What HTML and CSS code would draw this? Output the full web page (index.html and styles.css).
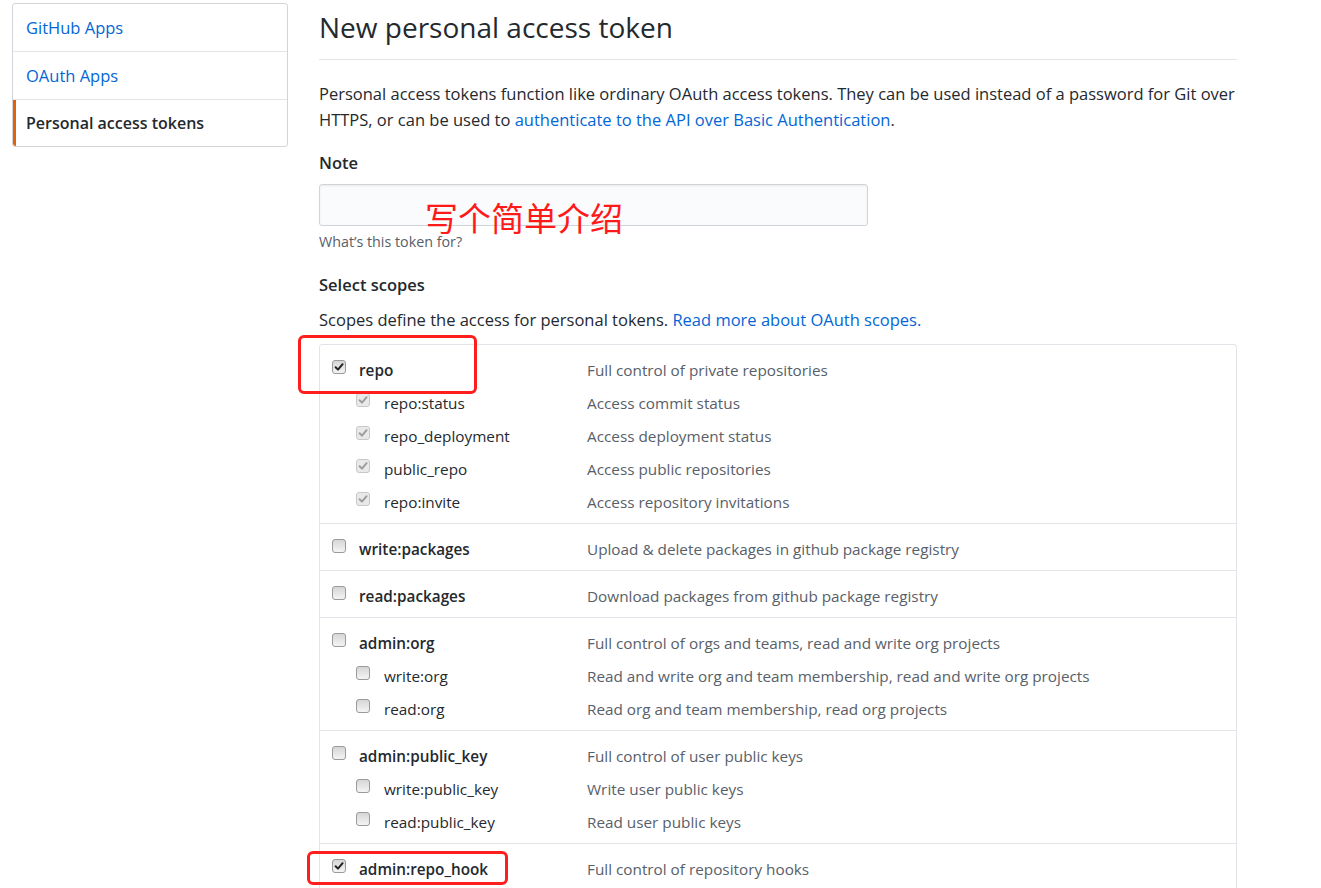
FILE: index.html
```html
<!DOCTYPE html>
<html lang="en">
<head>
<meta charset="utf-8">
<title>New personal access token</title>
<link rel="stylesheet" href="styles.css">
</head>
<body>
<div class="page">
  <nav class="menu">
    <a class="menu-item" href="#">GitHub Apps</a>
    <a class="menu-item" href="#">OAuth Apps</a>
    <a class="menu-item selected" href="#">Personal access tokens</a>
  </nav>
  <main class="content">
    <h1 class="title">New personal access token</h1>
    <p class="text intro">Personal access tokens function like ordinary OAuth access tokens. They can be used instead of a password for Git over HTTPS, or can be used to <a class="link" href="#">authenticate to the API over Basic Authentication</a>.</p>

    <div class="field">
      <div class="field-label">Note</div>
      <div class="note-wrap">
        <input class="note-input" type="text">
        <span class="annot-text">写个简单介绍</span>
      </div>
      <p class="hint">What’s this token for?</p>
    </div>

    <div class="field-label scopes-label">Select scopes</div>
    <p class="text scopes-desc">Scopes define the access for personal tokens. <a class="link" href="#">Read more about OAuth scopes.</a></p>

    <div class="scopes">
      <div class="group">
        <span class="annot-box box-repo"></span>
        <div class="item main"><div class="name"><span class="cb checked"><svg viewBox="0 0 12 12"><path d="M2.6 6.2 5 8.6 9.6 3.2"/></svg></span>repo</div><div class="desc">Full control of private repositories</div></div>
        <div class="item sub"><div class="name"><span class="cb checked disabled"><svg viewBox="0 0 12 12"><path d="M2.6 6.2 5 8.6 9.6 3.2"/></svg></span>repo:status</div><div class="desc">Access commit status</div></div>
        <div class="item sub"><div class="name"><span class="cb checked disabled"><svg viewBox="0 0 12 12"><path d="M2.6 6.2 5 8.6 9.6 3.2"/></svg></span>repo_deployment</div><div class="desc">Access deployment status</div></div>
        <div class="item sub"><div class="name"><span class="cb checked disabled"><svg viewBox="0 0 12 12"><path d="M2.6 6.2 5 8.6 9.6 3.2"/></svg></span>public_repo</div><div class="desc">Access public repositories</div></div>
        <div class="item sub"><div class="name"><span class="cb checked disabled"><svg viewBox="0 0 12 12"><path d="M2.6 6.2 5 8.6 9.6 3.2"/></svg></span>repo:invite</div><div class="desc">Access repository invitations</div></div>
      </div>
      <div class="group">
        <div class="item main"><div class="name"><span class="cb"></span>write:packages</div><div class="desc">Upload &amp; delete packages in github package registry</div></div>
      </div>
      <div class="group">
        <div class="item main"><div class="name"><span class="cb"></span>read:packages</div><div class="desc">Download packages from github package registry</div></div>
      </div>
      <div class="group">
        <div class="item main"><div class="name"><span class="cb"></span>admin:org</div><div class="desc">Full control of orgs and teams, read and write org projects</div></div>
        <div class="item sub"><div class="name"><span class="cb"></span>write:org</div><div class="desc">Read and write org and team membership, read and write org projects</div></div>
        <div class="item sub"><div class="name"><span class="cb"></span>read:org</div><div class="desc">Read org and team membership, read org projects</div></div>
      </div>
      <div class="group">
        <div class="item main"><div class="name"><span class="cb"></span>admin:public_key</div><div class="desc">Full control of user public keys</div></div>
        <div class="item sub"><div class="name"><span class="cb"></span>write:public_key</div><div class="desc">Write user public keys</div></div>
        <div class="item sub"><div class="name"><span class="cb"></span>read:public_key</div><div class="desc">Read user public keys</div></div>
      </div>
      <div class="group">
        <span class="annot-box box-hook"></span>
        <div class="item main"><div class="name"><span class="cb checked"><svg viewBox="0 0 12 12"><path d="M2.6 6.2 5 8.6 9.6 3.2"/></svg></span>admin:repo_hook</div><div class="desc">Full control of repository hooks</div></div>
        <div class="item sub"><div class="name"><span class="cb checked disabled"><svg viewBox="0 0 12 12"><path d="M2.6 6.2 5 8.6 9.6 3.2"/></svg></span>write:repo_hook</div><div class="desc">Write repository hooks</div></div>
        <div class="item sub"><div class="name"><span class="cb checked disabled"><svg viewBox="0 0 12 12"><path d="M2.6 6.2 5 8.6 9.6 3.2"/></svg></span>read:repo_hook</div><div class="desc">Read repository hooks</div></div>
      </div>
    </div>
  </main>
</div>
</body>
</html>
```

FILE: styles.css
```css
html, body {
  margin: 0;
  padding: 0;
  background: #fff;
}
body {
  font-family: "Open Sans", "Noto Sans", "Noto Sans CJK SC", sans-serif;
  color: #24292e;
  font-size: 16px;
  overflow: hidden;
}
.page {
  display: flex;
  align-items: flex-start;
  gap: 31px;
  padding: 3px 0 0 12px;
}
.menu {
  width: 276px;
  box-sizing: border-box;
  border: 1px solid #d1d5da;
  border-radius: 3px;
  display: flex;
  flex-direction: column;
  flex-shrink: 0;
}
.menu-item {
  display: block;
  height: 47px;
  line-height: 48px;
  padding-left: 13px;
  font-size: 16.5px;
  color: #0366d6;
  text-decoration: none;
  border-bottom: 1px solid #e1e4e8;
}
.menu-item:last-child {
  border-bottom: 0;
  height: 46px;
  line-height: 46px;
}
.menu-item.selected {
  color: #24292e;
  font-size: 16px;
  font-weight: 600;
  border-left: 3px solid #e36209;
  padding-left: 10px;
  border-bottom-left-radius: 3px;
}
.content {
  width: 918px;
  flex-shrink: 0;
}
.title {
  margin: 0;
  padding: 5px 0 13px;
  line-height: 38px;
  font-size: 28px;
  font-weight: 400;
  border-bottom: 1px solid #e1e4e8;
}
.text {
  font-size: 16.5px;
  line-height: 26px;
  margin: 0;
}
.intro {
  margin-top: 21px;
}
.link {
  color: #0366d6;
  text-decoration: none;
}
.field {
  margin-top: 18px;
}
.field-label {
  font-size: 16.5px;
  font-weight: 600;
  line-height: 24px;
}
.note-wrap {
  position: relative;
  margin-top: 9px;
  width: 549px;
}
.note-input {
  display: block;
  box-sizing: border-box;
  width: 549px;
  height: 42px;
  margin: 0;
  background: #fafbfc;
  border: 1px solid #d1d5da;
  border-radius: 3px;
  box-shadow: inset 0 1px 2px rgba(27,31,35,0.075);
}
.annot-text {
  position: absolute;
  left: 106px;
  top: 13px;
  font-family: "Noto Sans CJK SC", sans-serif;
  font-size: 33px;
  line-height: 40px;
  color: #ff1a1a;
  white-space: nowrap;
}
.hint {
  margin: 6px 0 0;
  font-size: 14.3px;
  line-height: 20px;
  color: #586069;
}
.scopes-label {
  margin-top: 21px;
}
.scopes-desc {
  margin-top: 10px;
}
.scopes {
  margin-top: 11px;
  border: 1px solid #e1e4e8;
  border-radius: 3px;
}
.group {
  position: relative;
  padding: 8px 0 5px;
  border-bottom: 1px solid #e1e4e8;
}
.group:last-child {
  border-bottom: 0;
}
.item {
  display: grid;
  grid-template-columns: 267px 1fr;
  height: 33px;
  align-items: center;
  font-size: 15.3px;
}
.name {
  display: flex;
  align-items: center;
  padding-left: 12px;
  white-space: nowrap;
}
.item.main .name {
  font-weight: 600;
}
.item.sub .name {
  padding-left: 36px;
}
.desc {
  color: #586069;
  white-space: nowrap;
}
.cb {
  width: 14px;
  height: 14px;
  box-sizing: border-box;
  margin-right: 13px;
  margin-bottom: 6px;
  flex-shrink: 0;
  border: 1px solid #9a9a9a;
  border-radius: 3px;
  background: linear-gradient(#d6d6d6, #f4f4f4);
  display: flex;
}
.item.sub .cb {
  margin-right: 14px;
}
.cb svg {
  width: 12px;
  height: 12px;
  fill: none;
  stroke: #222;
  stroke-width: 2;
  stroke-linecap: round;
  stroke-linejoin: round;
}
.cb.disabled {
  border-color: #c8c8c8;
  background: #e9e9e9;
}
.cb.disabled svg {
  stroke: #9d9d9d;
}
.annot-box {
  position: absolute;
  box-sizing: border-box;
  border: 3px solid #ff1e1e;
  border-radius: 6px;
  pointer-events: none;
}
.box-repo {
  left: -22px;
  top: -10px;
  width: 179px;
  height: 59px;
}
.box-hook {
  left: -13px;
  top: 7px;
  width: 201px;
  height: 34px;
}
```
